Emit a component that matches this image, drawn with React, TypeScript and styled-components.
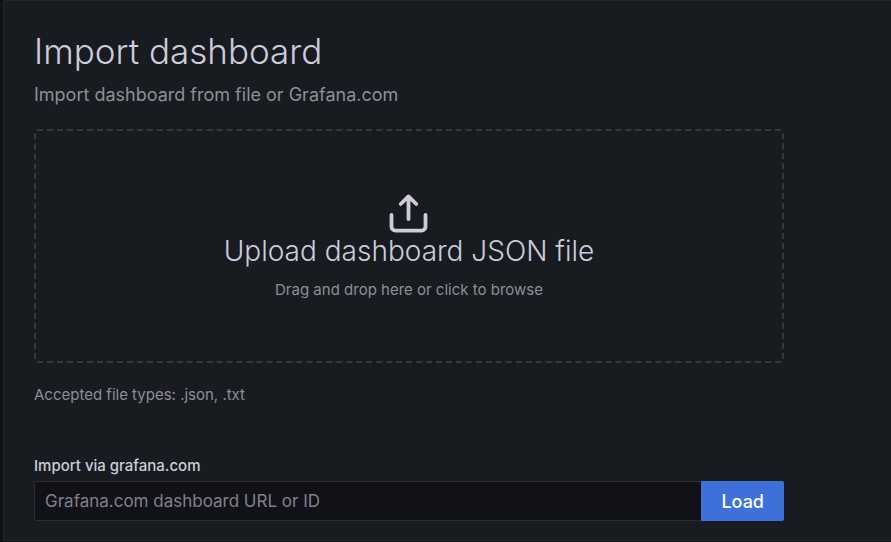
import React from "react";
import styled, { createGlobalStyle } from "styled-components";

const GlobalStyle = createGlobalStyle`
  *, *::before, *::after { box-sizing: border-box; }
  body {
    margin: 0;
    background: #111217;
    color: #ccccdc;
    font-family: Inter, "Liberation Sans", sans-serif;
  }
`;

const Panel = styled.main`
  min-height: calc(100vh - 1px);
  margin-left: 3px;
  padding: 30px 107px 19px 30px;
  background: #181b1f;
  border: 1px solid #25272c;
  border-right: 0;
  border-top-left-radius: 2px;
`;

const Title = styled.h1`
  margin: 0;
  font-size: 35px;
  line-height: 40px;
  font-weight: 300;
`;

const Subtitle = styled.p`
  margin: 12px 0 22px;
  font-size: 18px;
  line-height: 24px;
  color: #8e8e99;
`;

const DropZone = styled.button`
  display: flex;
  flex-direction: column;
  align-items: center;
  justify-content: center;
  width: 100%;
  padding: 61px 20px 60px;
  border: 2px dashed #36383d;
  border-radius: 3px;
  background: transparent;
  color: inherit;
  font-family: inherit;
  cursor: pointer;
`;

const UploadIcon = styled.svg`
  width: 48px;
  height: 42px;
`;

const DropTitle = styled.span`
  font-size: 28px;
  line-height: 34px;
  font-weight: 300;
`;

const DropHint = styled.span`
  margin-top: 11px;
  font-size: 15px;
  line-height: 22px;
  color: #8e8e99;
`;

const FileTypes = styled.p`
  margin: 20px 0 50px;
  font-size: 15px;
  line-height: 24px;
  color: #8e8e99;
`;

const Label = styled.label`
  display: block;
  margin-bottom: 6px;
  font-size: 15px;
  line-height: 18px;
  font-weight: 500;
`;

const Field = styled.form`
  display: flex;
  height: 40px;
`;

const UrlInput = styled.input`
  flex: 1;
  min-width: 0;
  padding: 0 10px;
  border: 1px solid #2c2d33;
  border-right: 0;
  border-radius: 2px 0 0 2px;
  background: #111217;
  color: #ccccdc;
  font: 17px Inter, "Liberation Sans", sans-serif;
  &::placeholder { color: #80818b; opacity: 1; }
`;

const LoadButton = styled.button`
  padding: 0 20px;
  border: 0;
  border-radius: 0 2px 2px 0;
  background: #3d71d9;
  color: #fff;
  font: 500 18px Inter, "Liberation Sans", sans-serif;
  cursor: pointer;
`;

export default function App() {
  return (
    <>
      <GlobalStyle />
      <Panel>
        <Title>Import dashboard</Title>
        <Subtitle>Import dashboard from file or Grafana.com</Subtitle>
        <DropZone type="button">
          <UploadIcon viewBox="0 0 48 42" fill="none" stroke="currentColor" strokeWidth="3.8" strokeLinecap="round" strokeLinejoin="round" aria-hidden="true">
            <path d="M23.5 27V4.4M15.7 12l7.8-7.6 7.8 7.6M6.5 23v11.7a4 4 0 0 0 4 4h26a4 4 0 0 0 4-4V23" />
          </UploadIcon>
          <DropTitle>Upload dashboard JSON file</DropTitle>
          <DropHint>Drag and drop here or click to browse</DropHint>
        </DropZone>
        <FileTypes>Accepted file types: .json, .txt</FileTypes>
        <Label htmlFor="dashboard-url">Import via grafana.com</Label>
        <Field onSubmit={(event) => event.preventDefault()}>
          <UrlInput id="dashboard-url" placeholder="Grafana.com dashboard URL or ID" />
          <LoadButton type="submit">Load</LoadButton>
        </Field>
      </Panel>
    </>
  );
}
